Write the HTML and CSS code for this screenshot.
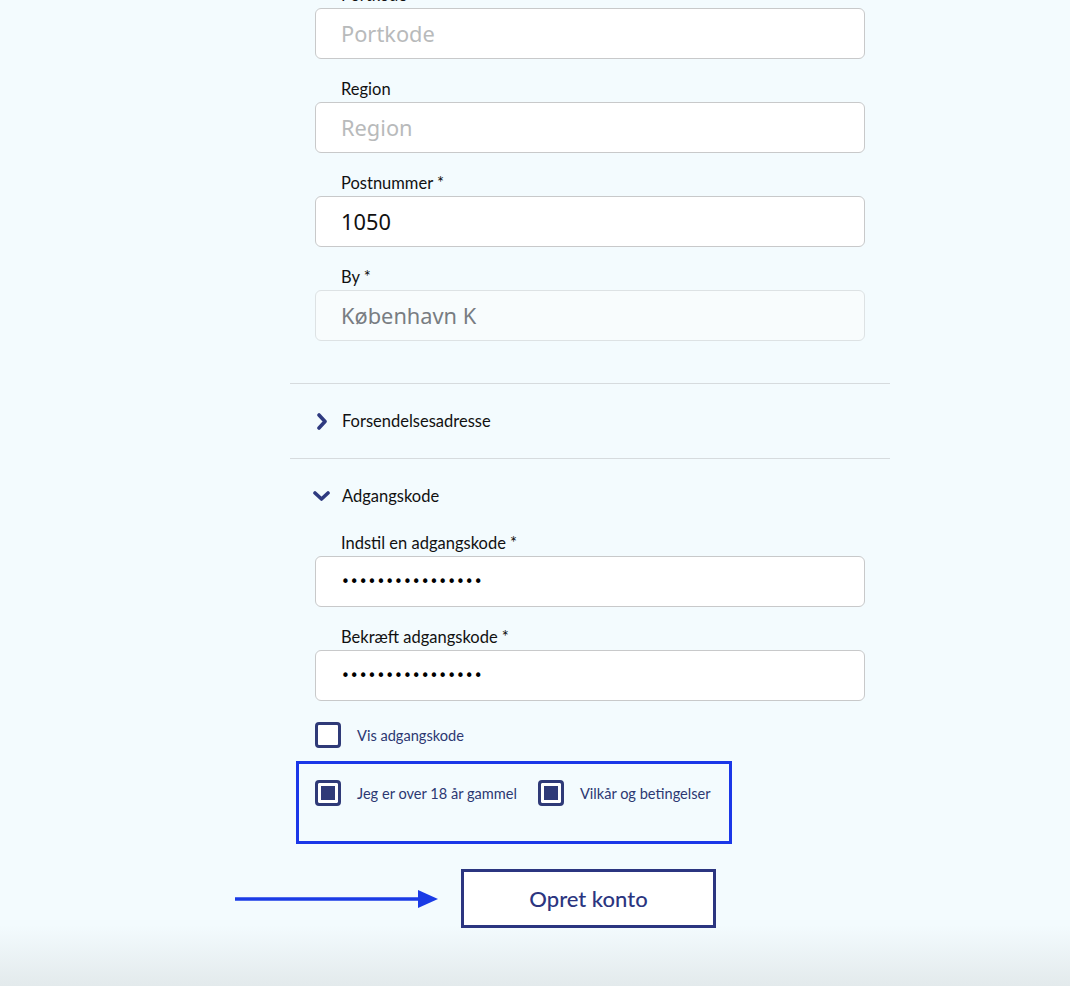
FILE: index.html
```html
<!DOCTYPE html>
<html lang="da">
<head>
<meta charset="utf-8">
<title>Opret konto</title>
<link rel="stylesheet" href="styles.css">
</head>
<body>
<main class="page">
  <form class="form">
    <div class="fields">
      <div class="field">
        <label class="field-label" for="portkode">Portkode</label>
        <input class="input" id="portkode" type="text" placeholder="Portkode">
      </div>
      <div class="field">
        <label class="field-label" for="region">Region</label>
        <input class="input" id="region" type="text" placeholder="Region">
      </div>
      <div class="field">
        <label class="field-label" for="postnr">Postnummer *</label>
        <input class="input" id="postnr" type="text" value="1050">
      </div>
      <div class="field">
        <label class="field-label" for="by">By *</label>
        <input class="input input-disabled" id="by" type="text" value="København K" disabled>
      </div>
    </div>

    <section class="section">
      <div class="section-head">
        <span class="chev">
          <svg width="17" height="17" viewBox="0 0 17 17"><polyline points="6,2 12,8.5 6,15" fill="none" stroke="#2e3a80" stroke-width="3.6" stroke-linecap="round" stroke-linejoin="round"/></svg>
        </span>
        <span class="section-title">Forsendelsesadresse</span>
      </div>
    </section>

    <section class="section">
      <div class="section-head">
        <span class="chev">
          <svg width="17" height="17" viewBox="0 0 17 17"><polyline points="2,5 8.5,11 15,5" fill="none" stroke="#2e3a80" stroke-width="3.6" stroke-linecap="round" stroke-linejoin="round"/></svg>
        </span>
        <span class="section-title">Adgangskode</span>
      </div>
      <div class="fields">
        <div class="field">
          <label class="field-label" for="pw1">Indstil en adgangskode *</label>
          <input class="input input-pw" id="pw1" type="password" value="abcdefghijklmnop">
        </div>
        <div class="field">
          <label class="field-label" for="pw2">Bekræft adgangskode *</label>
          <input class="input input-pw" id="pw2" type="password" value="abcdefghijklmnop">
        </div>
      </div>

      <div class="check-row">
        <label class="check">
          <input class="check-input" type="checkbox">
          <span class="check-text">Vis adgangskode</span>
        </label>
      </div>

      <div class="highlight">
        <label class="check">
          <input class="check-input" type="checkbox" checked>
          <span class="check-text">Jeg er over 18 år gammel</span>
        </label>
        <label class="check">
          <input class="check-input" type="checkbox" checked>
          <span class="check-text">Vilkår og betingelser</span>
        </label>
      </div>
    </section>
  </form>

  <div class="submit-row">
    <svg class="arrow" width="203" height="20" viewBox="0 0 203 20">
      <line x1="0" y1="10" x2="186" y2="10" stroke="#1a3be6" stroke-width="3.4"/>
      <polygon points="183,1 203,10 183,19" fill="#1a3be6"/>
    </svg>
    <button class="submit" type="button">Opret konto</button>
  </div>
</main>
</body>
</html>
```

FILE: styles.css
```css
html {
  min-height: 986px;
  background: linear-gradient(to bottom, #f3fbfe 0, #f3fbfe 925px, #e3eaec 986px);
}

body {
  margin: 0;
  font-family: Lato, "Noto Sans", sans-serif;
  color: #111;
}

.page {
  overflow: hidden;
  height: 986px;
}

.form {
  width: 600px;
  margin: -15px 0 0 290px;
}

.fields {
  display: flex;
  flex-direction: column;
  gap: 20px;
  padding: 0 25px;
}

.field {
  display: flex;
  flex-direction: column;
}

.field-label {
  display: block;
  height: 20px;
  line-height: 20px;
  margin-bottom: 3px;
  padding-left: 26px;
  font-size: 16.5px;
  color: #111;
}

.input {
  box-sizing: border-box;
  width: 100%;
  height: 51px;
  margin: 0;
  padding: 0 25px;
  border: 1px solid #c8c9ca;
  border-radius: 6px;
  background: #fff;
  font-family: "Noto Sans", "Open Sans", sans-serif;
  font-size: 21.8px;
  color: #111;
  outline: none;
}

.input::placeholder {
  color: #b8babb;
}

.input-disabled {
  background: #f8fcfd;
  border-color: #dde2e4;
  color: #787d82;
  -webkit-text-fill-color: #787d82;
  opacity: 1;
}

.input-pw {
  font-family: "DejaVu Sans", sans-serif;
  font-size: 15px;
  letter-spacing: 0;
  color: #000;
}

.section {
  margin-top: 42px;
  border-top: 1px solid #d6dbde;
}

.section + .section {
  margin-top: 0;
}

.section-head {
  display: flex;
  align-items: center;
  gap: 12px;
  height: 74px;
  padding-left: 23px;
}

.chev {
  display: flex;
  width: 17px;
  height: 17px;
}

.section-title {
  font-size: 16.5px;
  color: #111;
}

.check-row {
  margin-top: 21px;
  padding-left: 25px;
}

.check {
  display: flex;
  align-items: center;
  gap: 16px;
}

.check-input {
  appearance: none;
  -webkit-appearance: none;
  box-sizing: border-box;
  width: 26px;
  height: 26px;
  margin: 0;
  border: 3px solid #2f3a78;
  border-radius: 4px;
  background: #fff;
}

.check-input:checked {
  background: #2f3a78;
  box-shadow: inset 0 0 0 3px #fff;
}

.check-text {
  font-size: 14.6px;
  color: #2c3872;
}

.highlight {
  box-sizing: border-box;
  display: flex;
  align-items: center;
  gap: 21px;
  width: 436px;
  margin: 13px 0 0 6px;
  padding: 16px 0 35px 16px;
  border: 3px solid #1a37e8;
}

.submit-row {
  display: flex;
  align-items: center;
  gap: 23px;
  margin: 25px 0 0 235px;
}

.arrow {
  display: block;
}

.submit {
  box-sizing: border-box;
  width: 255px;
  height: 59px;
  border: 3px solid #2b3580;
  background: #fff;
  font-family: Lato, "Noto Sans", sans-serif;
  font-size: 22px;
  font-weight: 500;
  color: #2b3580;
  cursor: pointer;
}
```
